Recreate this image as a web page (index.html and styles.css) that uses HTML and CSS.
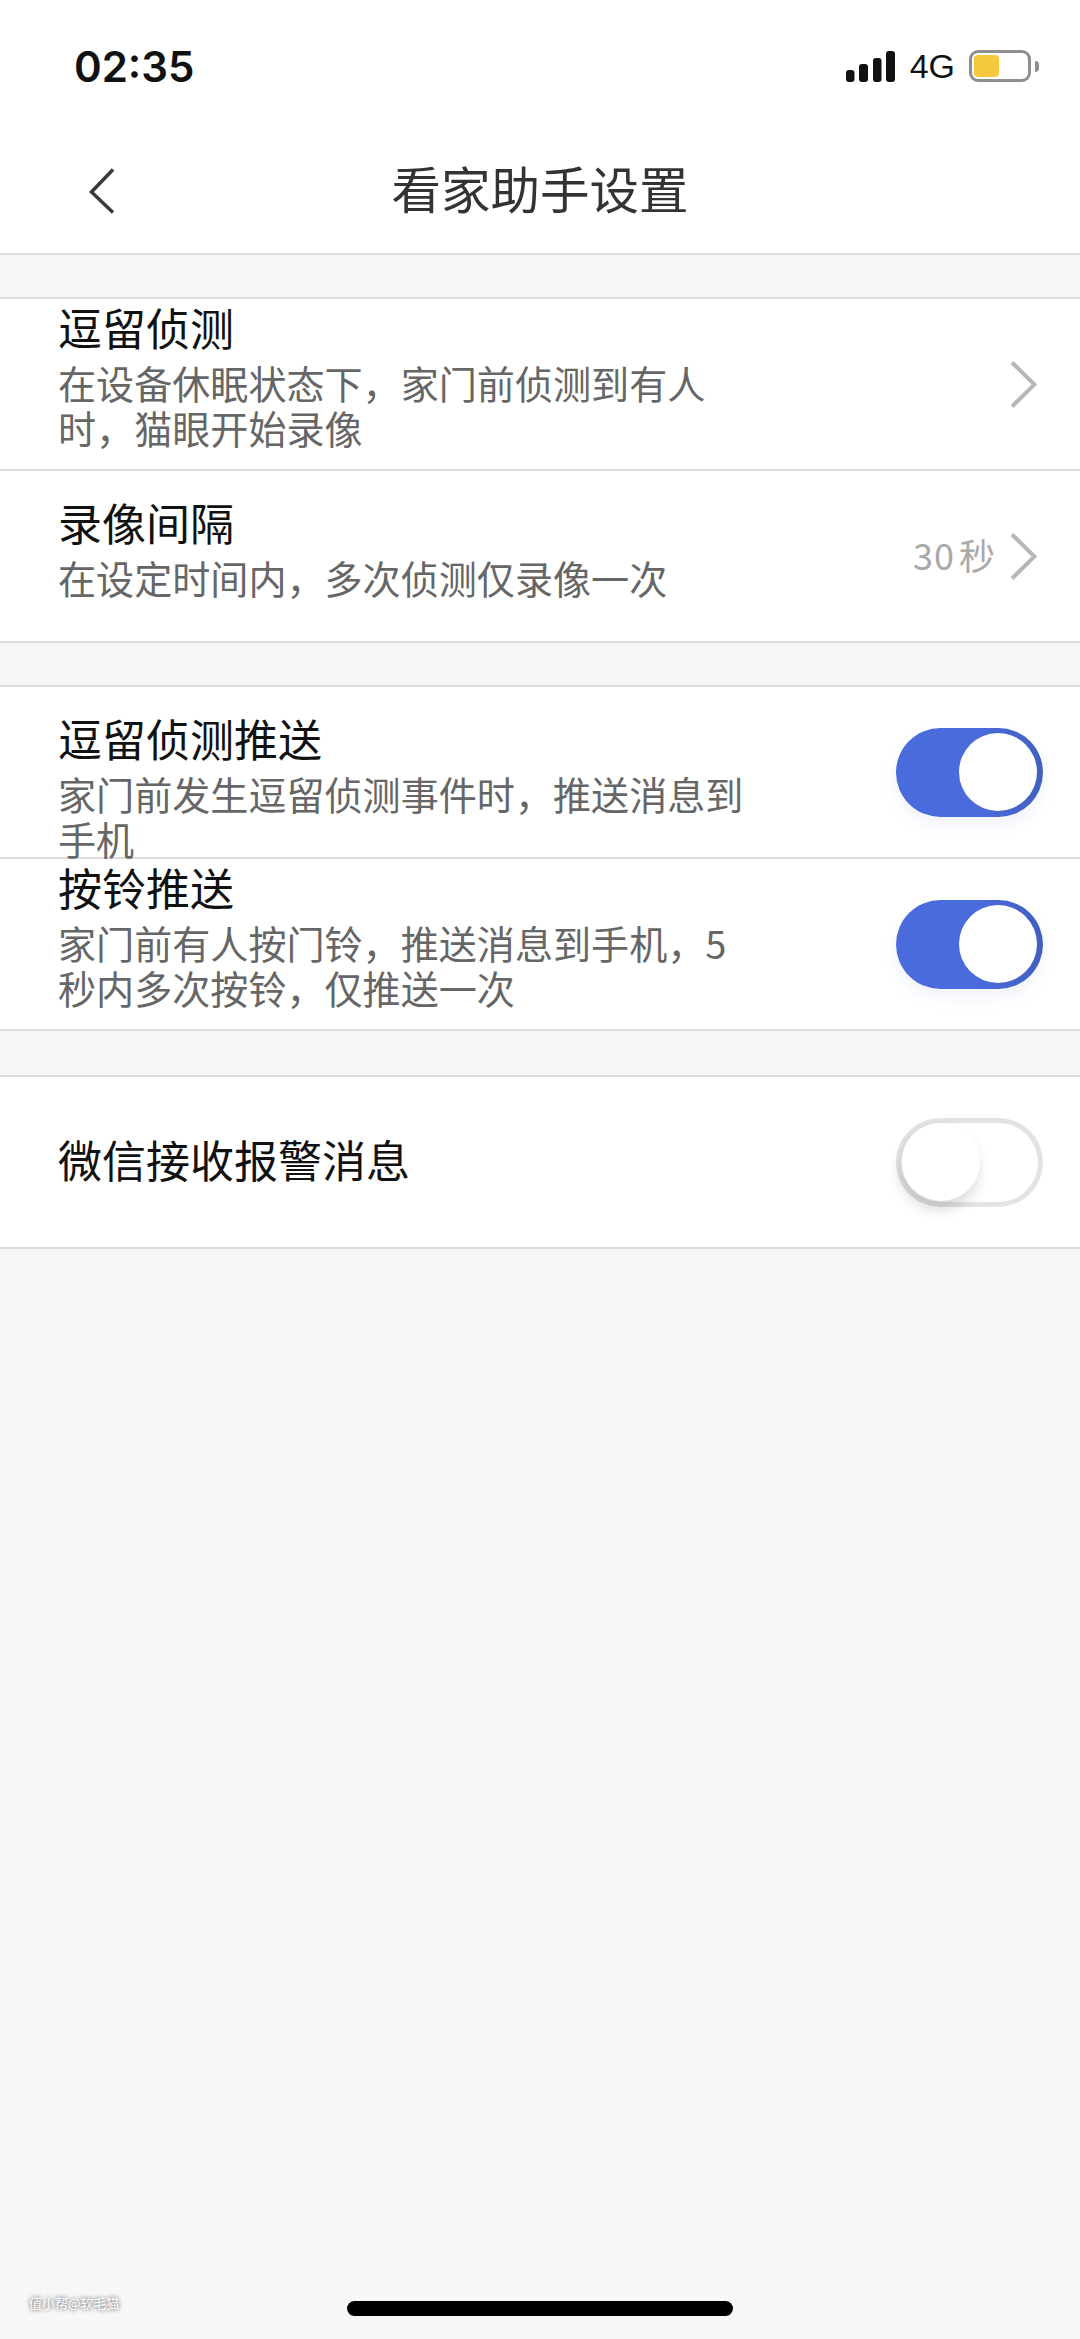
FILE: index.html
```html
<!DOCTYPE html>
<html lang="zh-CN">
<head>
    <meta charset="UTF-8">
    <title>看家助手设置</title>
    <link rel="stylesheet" href="styles.css">
</head>
<body>
    <div class="page">
        <header class="top">
            <div class="status">
                <span class="time">02:35</span>
                <div class="status-right">
                    <svg class="signal" width="49" height="31" viewBox="0 0 49 31">
                        <rect x="0" y="19" width="8.5" height="12" rx="3" />
                        <rect x="13" y="13" width="9" height="18" rx="3" />
                        <rect x="27" y="7" width="8.5" height="24" rx="3" />
                        <rect x="40" y="0" width="9" height="31" rx="3" />
                    </svg>
                    <span class="net">4G</span>
                    <div class="battery"><div class="battery-fill"></div></div>
                    <div class="battery-nub"></div>
                </div>
            </div>
            <nav class="nav">
                <svg class="back" width="26" height="46" viewBox="0 0 26 46">
                    <path d="M24 1.5 L2.5 24 L24 44.5" />
                </svg>
                <h1 class="nav-title">看家助手设置</h1>
                <span></span>
            </nav>
        </header>

        <section class="group">
            <div class="row">
                <div class="row-text">
                    <div class="label">逗留侦测</div>
                    <div class="desc">在设备休眠状态下，家门前侦测到有人<br>时，猫眼开始录像</div>
                </div>
                <svg class="chevron" width="27" height="47" viewBox="0 0 27 47">
                    <path d="M2 1.5 L24.5 23.5 L2 45.5" />
                </svg>
            </div>
            <div class="row">
                <div class="row-text">
                    <div class="label">录像间隔</div>
                    <div class="desc">在设定时间内，多次侦测仅录像一次</div>
                </div>
                <span class="value">30<i>秒</i></span>
                <svg class="chevron" width="27" height="47" viewBox="0 0 27 47">
                    <path d="M2 1.5 L24.5 23.5 L2 45.5" />
                </svg>
            </div>
        </section>

        <section class="group">
            <div class="row">
                <div class="row-text">
                    <div class="label">逗留侦测推送</div>
                    <div class="desc desc-short">家门前发生逗留侦测事件时，推送消息到<br>手机</div>
                </div>
                <div class="switch on"><div class="knob"></div></div>
            </div>
            <div class="row">
                <div class="row-text">
                    <div class="label">按铃推送</div>
                    <div class="desc">家门前有人按门铃，推送消息到手机，5<br>秒内多次按铃，仅推送一次</div>
                </div>
                <div class="switch on"><div class="knob"></div></div>
            </div>
        </section>

        <section class="group group-last">
            <div class="row">
                <div class="row-text">
                    <div class="label label-only">微信接收报警消息</div>
                </div>
                <div class="switch"><div class="knob"></div></div>
            </div>
        </section>

        <footer class="bottom">
            <span class="watermark">值小帮@软毛猫</span>
            <div class="home-bar"></div>
        </footer>
    </div>
</body>
</html>
```

FILE: styles.css
```css
* {
    box-sizing: border-box;
}
body {
    margin: 0;
    background-color: #f7f7f7;
    font-family: "Noto Sans CJK SC", "Liberation Sans", sans-serif;
}
.page {
    display: flex;
    flex-direction: column;
    height: 2339px;
    overflow: hidden;
}

/* status bar + title */
.top {
    background: #fff;
    border-bottom: 2px solid #dcdcdc;
    height: 255px;
}
.status {
    display: flex;
    justify-content: space-between;
    align-items: center;
    height: 128px;
    padding: 4px 41px 0 74px;
}
.time {
    font-family: Inter, "Liberation Sans", sans-serif;
    font-size: 42px;
    font-weight: 600;
    color: #111;
}
.status-right {
    display: flex;
    align-items: center;
}
.signal {
    fill: #111;
    margin-top: 1px;
}
.net {
    font-family: "Liberation Sans", sans-serif;
    font-size: 34px;
    color: #111;
    margin-left: 15px;
    margin-right: 14px;
}
.battery {
    width: 62px;
    height: 32px;
    border: 3px solid #8e8e8e;
    border-radius: 9px;
    padding: 2px;
}
.battery-fill {
    width: 25px;
    height: 100%;
    background: #f5c93c;
    border-radius: 4px;
}
.battery-nub {
    width: 4px;
    height: 11px;
    margin-left: 4px;
    background: #8e8e8e;
    border-radius: 0 4px 4px 0;
}
.nav {
    display: grid;
    grid-template-columns: 1fr auto 1fr;
    align-items: center;
    height: 125px;
    padding: 0 89px;
}
.back {
    fill: none;
    stroke: #3a3a3a;
    stroke-width: 3.5;
}
.nav-title {
    margin: 0 0 6px;
    font-size: 49.5px;
    font-weight: 400;
    color: #333;
}

/* settings groups */
.group {
    margin-top: 42px;
    background: #fff;
    border-top: 2px solid #dcdcdc;
    flex: none;
}
.group-last {
    margin-top: 44px;
}
.row {
    display: flex;
    align-items: center;
    height: 172px;
    padding: 0 37px 0 58px;
    border-bottom: 2px solid #dcdcdc;
}
.row-text {
    flex: 1;
    min-width: 0;
}
.label {
    font-size: 44px;
    line-height: 48px;
    color: #111;
}
.label-only {
    margin-bottom: 6px;
}
.desc {
    margin-top: 9px;
    margin-bottom: 15px;
    font-size: 38.1px;
    line-height: 45px;
    color: #666;
    white-space: nowrap;
}
/* text is taller than its box here, second line runs down to the divider */
.desc-short {
    height: 45px;
}
.value {
    font-size: 36px;
    color: #a9a9a9;
    margin-right: 14px;
    margin-bottom: 4px;
    letter-spacing: 1px;
}
.value i {
    font-style: normal;
    margin-left: 4px;
}
.chevron {
    fill: none;
    stroke: #b7b7b7;
    stroke-width: 4;
    margin-right: 6px;
}

/* toggles */
.switch {
    display: flex;
    width: 147px;
    height: 89px;
    padding: 5px 6px;
    border-radius: 45px;
    background: #fff;
    box-shadow: inset 0 0 0 5px #e3e3e3;
}
.switch .knob {
    width: 78px;
    height: 78px;
    border-radius: 50%;
    background: #fff;
    box-shadow: -2px 8px 14px rgba(0, 0, 0, 0.16);
}
.switch.on {
    justify-content: flex-end;
    background: linear-gradient(90deg, #4a6bdc 0%, #4a6bdc 55%, #4060c0 100%);
    box-shadow: 0 8px 16px rgba(64, 96, 192, 0.08);
}
.switch.on .knob {
    box-shadow: none;
}

/* bottom */
.bottom {
    flex: 1;
    display: flex;
    justify-content: center;
    align-items: flex-end;
    position: relative;
    padding-bottom: 23px;
}
.home-bar {
    width: 386px;
    height: 15px;
    background: #000;
    border-radius: 8px;
}
.watermark {
    position: absolute;
    left: 29px;
    bottom: 27px;
    font-size: 13px;
    color: #fff;
    text-shadow: 0 0 4px #888, 0 0 4px #888;
}
```
